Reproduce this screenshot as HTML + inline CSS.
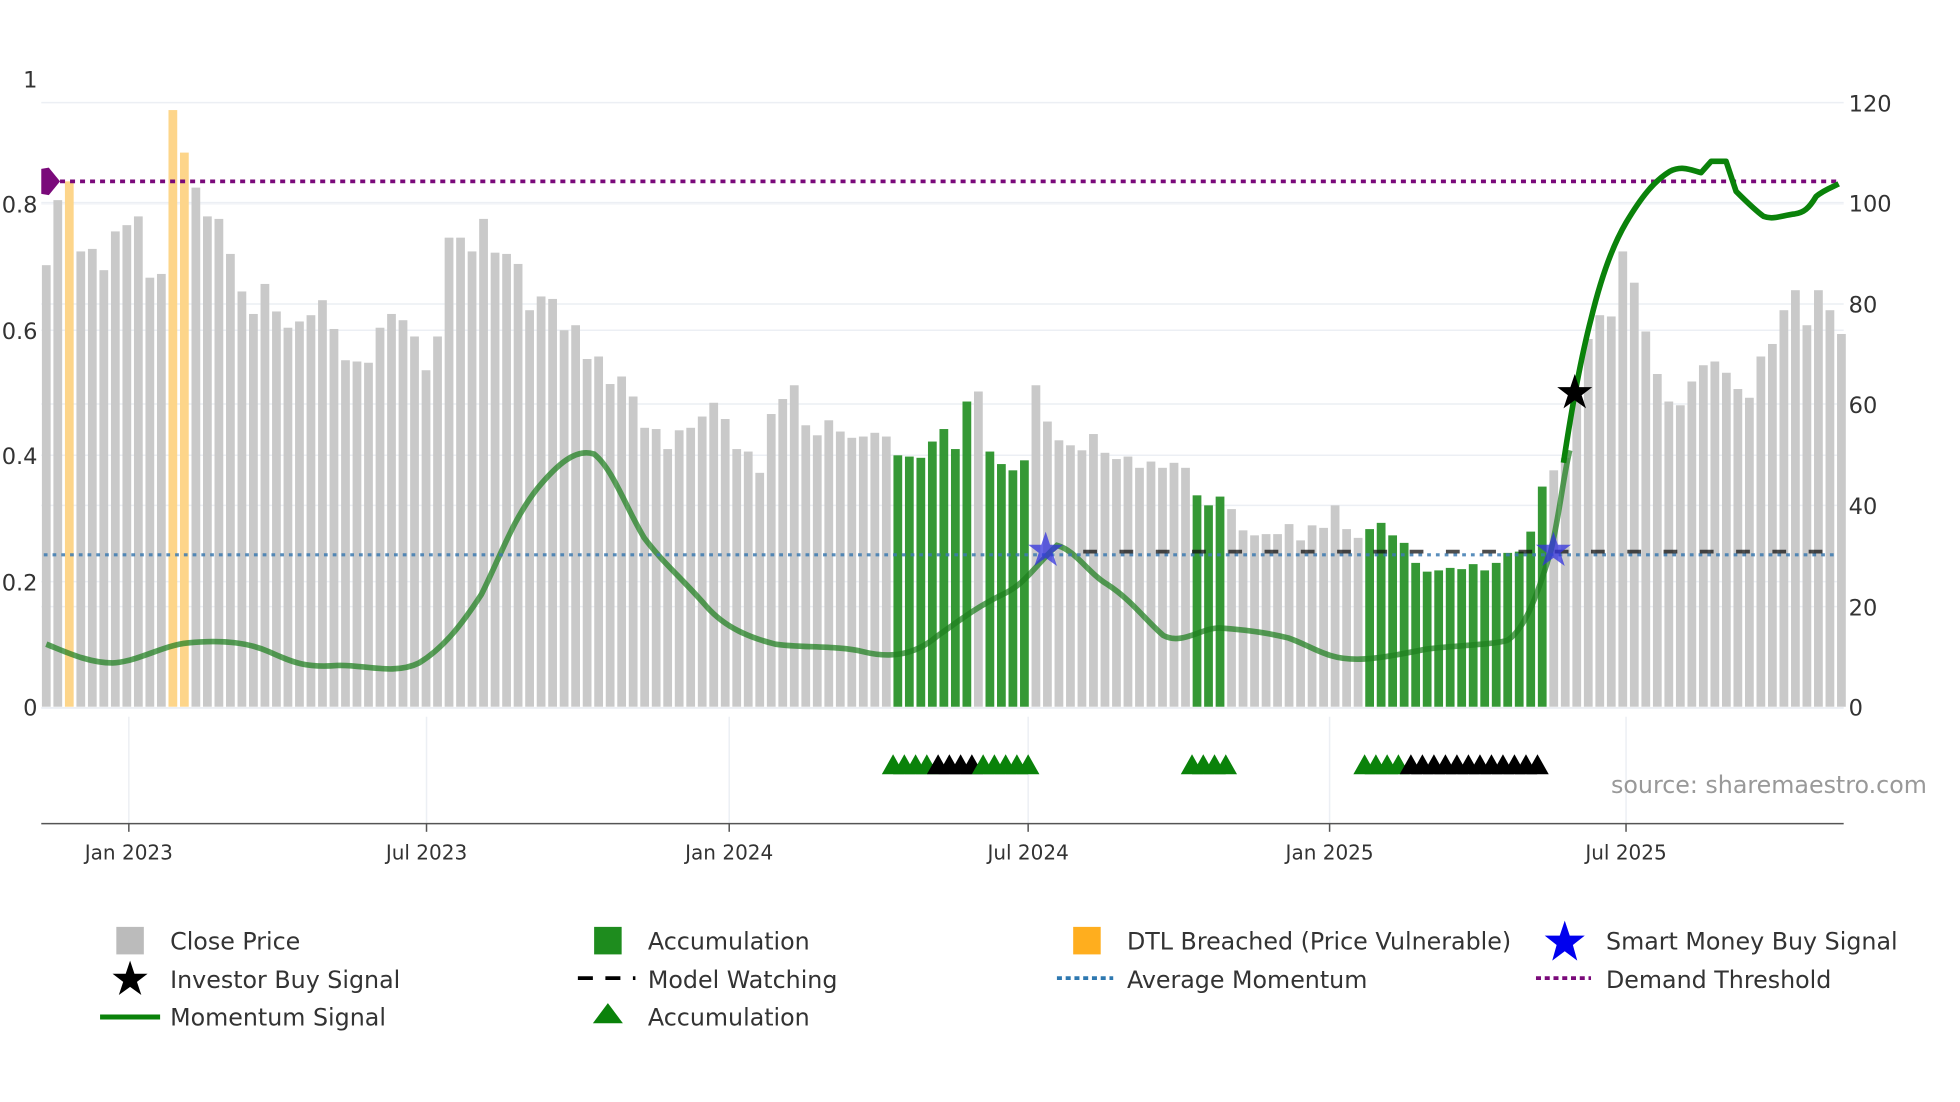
<!DOCTYPE html>
<html><head><meta charset="utf-8"><style>
html,body{margin:0;padding:0;background:#fff;width:1960px;height:1102px;overflow:hidden}
svg{display:block}
text{font-family:"DejaVu Sans","Liberation Sans",sans-serif;fill:#333}
</style></head><body>
<svg id="s" width="1960" height="1102" viewBox="0 0 1567 881" preserveAspectRatio="none" xmlns="http://www.w3.org/2000/svg">
<g stroke="#eceff4" stroke-width="1.2">
<line x1="33" x2="1474" y1="82" y2="82"/><line x1="33" x2="1474" y1="162" y2="162"/><line x1="33" x2="1474" y1="243" y2="243"/><line x1="33" x2="1474" y1="323" y2="323"/><line x1="33" x2="1474" y1="404" y2="404"/><line x1="33" x2="1474" y1="485" y2="485"/>
<line x1="33" x2="1474" y1="163" y2="163" stroke="#f2f4f8"/><line x1="33" x2="1474" y1="264" y2="264"/><line x1="33" x2="1474" y1="364" y2="364"/><line x1="33" x2="1474" y1="465" y2="465"/>
<line x1="103" x2="103" y1="573" y2="658"/><line x1="341" x2="341" y1="573" y2="658"/><line x1="583" x2="583" y1="573" y2="658"/><line x1="822" x2="822" y1="573" y2="658"/><line x1="1063" x2="1063" y1="573" y2="658"/><line x1="1300" x2="1300" y1="573" y2="658"/>
</g>
<line x1="33" x2="1474" y1="566" y2="566" stroke="#eceff4" stroke-width="1.5"/>
<g id="bars"></g>
<path d="M37,515 C50,520 70,530 90,530 C110,529 130,516 150,514 C170,512 195,512 215,521 C235,530 245,534 270,532 C290,531 315,540 335,530 C355,518 370,498 385,475 C400,445 410,415 430,390 C445,372 460,358 475,363 C490,375 500,405 515,430 C530,450 545,462 565,485 C580,502 600,510 620,515 C640,518 670,516 690,521 C710,526 730,525 750,508 C770,494 780,486 800,476 C820,467 825,455 845,436 C860,440 870,458 885,467 C905,480 915,495 930,508 C945,516 960,502 975,502 C990,503 1010,505 1030,510 C1050,517 1060,527 1085,527 C1100,527 1120,523 1140,519 C1160,516 1190,516 1205,512 C1218,504 1228,480 1240,440 C1247,410 1250,380 1255,360" fill="none" stroke="#1f7f1f" stroke-opacity="0.72" stroke-width="4.5"/>
<line x1="40" x2="1470" y1="145" y2="145" stroke="#7a0a7a" stroke-width="3" stroke-dasharray="4,4"/>
<path d="M33,135 L39,134 L48,145 L39,156 L33,155 Z" fill="#7a0a7a"/>
<line x1="35" x2="1470" y1="443.5" y2="443.5" stroke="#3c7ab0" stroke-opacity="0.85" stroke-width="2.5" stroke-dasharray="3,4"/>
<line x1="866" x2="1460" y1="441" y2="441" stroke="#111" stroke-opacity="0.75" stroke-width="3" stroke-dasharray="11,18"/>
<path d="M1250,370 C1256,330 1263,290 1272,255 C1280,222 1290,195 1300,178 C1312,158 1322,145 1335,137 C1345,132 1352,136 1360,138 L1368,129 L1380,129 L1388,153 C1395,160 1403,168 1410,173 C1418,176 1425,172 1435,171 C1442,170 1446,167 1452,157 C1458,152 1464,150 1470,147" fill="none" stroke="#0a820a" stroke-width="4.5" stroke-linejoin="round"/>
<path d="M836,425 L839.5,435.5 L850,435.5 L841.5,442 L845,452.5 L836,446 L827,452.5 L830.5,442 L822,435.5 L832.5,435.5 Z" fill="#3333dd" fill-opacity="0.75"/>
<path d="M1242,425 L1245.5,435.5 L1256,435.5 L1247.5,442 L1251,452.5 L1242,446 L1233,452.5 L1236.5,442 L1228,435.5 L1238.5,435.5 Z" fill="#3333dd" fill-opacity="0.75"/>
<path d="M1259,299 L1262.5,309.5 L1273,309.5 L1264.5,316 L1268,326.5 L1259,320 L1250,326.5 L1253.5,316 L1245,309.5 L1255.5,309.5 Z" fill="#000"/>
<g id="tri"></g>
<line x1="33" x2="1474" y1="658.5" y2="658.5" stroke="#555" stroke-width="1.2"/>
<g stroke="#555" stroke-width="1.2"><line x1="103" x2="103" y1="658" y2="665"/><line x1="341" x2="341" y1="658" y2="665"/><line x1="583" x2="583" y1="658" y2="665"/><line x1="822" x2="822" y1="658" y2="665"/><line x1="1063" x2="1063" y1="658" y2="665"/><line x1="1300" x2="1300" y1="658" y2="665"/></g>
<g font-size="16" text-anchor="middle">
<text x="103" y="687">Jan 2023</text><text x="341" y="687">Jul 2023</text><text x="583" y="687">Jan 2024</text><text x="822" y="687">Jul 2024</text><text x="1063" y="687">Jan 2025</text><text x="1300" y="687">Jul 2025</text>
</g>
<g font-size="18" text-anchor="end">
<text x="30" y="70">1</text><text x="30" y="170">0.8</text><text x="30" y="271">0.6</text><text x="30" y="371">0.4</text><text x="30" y="472">0.2</text><text x="30" y="572">0</text>
</g>
<g font-size="18">
<text x="1478" y="89">120</text><text x="1478" y="169">100</text><text x="1478" y="250">80</text><text x="1478" y="330">60</text><text x="1478" y="411">40</text><text x="1478" y="492">20</text><text x="1478" y="572">0</text>
</g>
<text x="1288" y="634" font-size="19" style="fill:#999">source: sharemaestro.com</text>
<g font-size="19">
<rect x="93" y="741" width="22" height="22" fill="#bbb"/><text x="136" y="759">Close Price</text>
<path d="M104,768 L107.5,778.5 L118,778.5 L109.5,785 L113,795.5 L104,789 L95,795.5 L98.5,785 L90,778.5 L100.5,778.5 Z" fill="#000"/><text x="136" y="790">Investor Buy Signal</text>
<line x1="80" x2="128" y1="813" y2="813" stroke="#0a820a" stroke-width="4"/><text x="136" y="820">Momentum Signal</text>
<rect x="475" y="741" width="22" height="22" fill="#1e8c1e"/><text x="518" y="759">Accumulation</text>
<line x1="462" x2="508" y1="782" y2="782" stroke="#000" stroke-width="3" stroke-dasharray="12,10"/><text x="518" y="790">Model Watching</text>
<path d="M486,802 L498,818 L474,818 Z" fill="#0a820a"/><text x="518" y="820">Accumulation</text>
<rect x="858" y="741" width="22" height="22" fill="#ffae1e"/><text x="901" y="759">DTL Breached (Price Vulnerable)</text>
<line x1="845" x2="890" y1="782" y2="782" stroke="#2e78b0" stroke-width="3" stroke-dasharray="4,3"/><text x="901" y="790">Average Momentum</text>
<path d="M1251,736 L1255,748 L1267,748 L1257.5,755.5 L1261,768 L1251,760.5 L1241,768 L1244.5,755.5 L1235,748 L1247,748 Z" fill="#0000ee"/><text x="1284" y="759">Smart Money Buy Signal</text>
<line x1="1228" x2="1272" y1="782" y2="782" stroke="#7a0a7a" stroke-width="3" stroke-dasharray="4,3"/><text x="1284" y="790">Demand Threshold</text>
</g>
</svg>
<script>
var t=[212,160,145,201,199,216,185,180,173,222,219,88,122,150,173,175,203,233,251,227,249,262,257,252,240,263,288,289,290,262,251,256,269,296,269,190,190,201,175,202,203,211,248,237,239,264,260,287,285,307,301,317,342,343,359,344,342,333,322,335,359,361,378,331,319,308,340,348,336,345,350,349,346,349,364,365,366,353,343,359,321,313,361,371,376,368,308,337,352,356,360,347,362,367,365,374,369,374,370,374,396,404,397,407,424,428,427,427,419,432,420,422,404,423,430,423,418,428,434,450,457,456,454,455,451,456,450,442,441,425,389,376,366,318,271,252,253,201,226,265,299,321,324,305,292,289,298,311,318,285,275,248,232,260,232,248,267];
var g={};[74,75,76,77,78,79,80,82,83,84,85,100,101,102].forEach(function(i){g[i]=1});for(var i=115;i<=130;i++)g[i]=1;
var o={2:1,11:1,12:1};
var h='';
for(var i=0;i<t.length;i++){var x=(33.5+9.2*i).toFixed(1);var c=g[i]?'fill="#2a922a" fill-opacity="0.95"':o[i]?'fill="#fdd58a"':'fill="#c9c9c9"';h+='<rect x="'+x+'" y="'+t[i]+'" width="7" height="'+(565-t[i])+'" '+c+'/>';}
document.getElementById('bars').innerHTML=h;
var tr='';
function T(x,c){tr+='<path d="M'+x+',603 L'+(x+9)+',619 L'+(x-9)+',619 Z" fill="'+c+'"/>';}
[714,723,732,741].forEach(function(x){T(x,'#0a820a')});
[750,759,768,777].forEach(function(x){T(x,'#000')});
[786,795,804,813,822].forEach(function(x){T(x,'#0a820a')});
[953,962,971,980].forEach(function(x){T(x,'#0a820a')});
[1091,1100,1109,1118].forEach(function(x){T(x,'#0a820a')});
for(var x=1128;x<=1238;x+=9.2)T(x,'#000');
document.getElementById('tri').innerHTML=tr;
</script>
</body></html>
